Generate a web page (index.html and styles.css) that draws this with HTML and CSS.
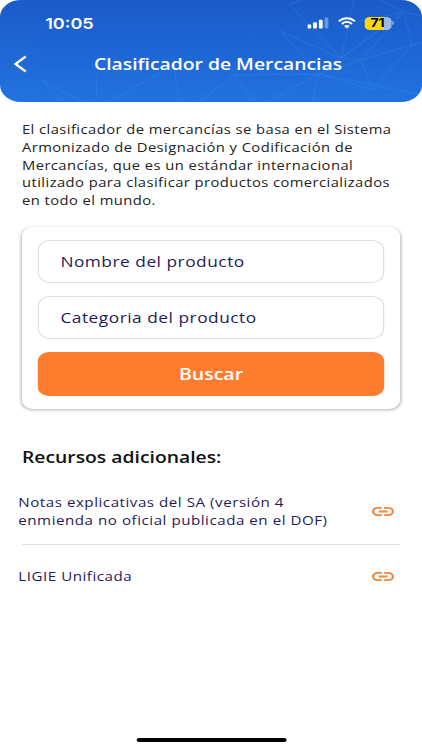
FILE: index.html
```html
<!DOCTYPE html>
<html lang="es">
<head>
  <meta charset="UTF-8" />
  <meta name="viewport" content="width=device-width, initial-scale=1.0" />
  <title>Clasificador de Mercancias</title>
  <link rel="stylesheet" href="styles.css">
</head>
<body>
  <div class="screen">
    <header class="header">
      <svg class="pattern" viewBox="0 0 422 102" preserveAspectRatio="none">
        <path d="M40 79 L84 102 M40 79 L64 101 M97 73 L96 102 M108 102 L160 73 M174 66 L179 102 M199 102 L234 75 L256 102 M234 75 L319 74 L312 102 M319 74 L267 102 M319 74 L422 95 M289 4 L341 58 L280 31 L319 74 L361 60 L412 45 M289 4 L302 0 M341 58 L354 0 M341 58 L404 12 L412 45 L422 42 M361 60 L404 12 L380 0 M361 60 L372 90 L412 45 M341 58 L361 60 M319 74 L372 90 M404 12 L422 16 M404 12 L355 22" />
      </svg>
      <div class="status-bar">
        <span class="clock">10:05</span>
        <svg class="signal" viewBox="0 0 21 12" preserveAspectRatio="none">
          <rect x="0" y="7.5" width="3.8" height="4" rx="1" />
          <rect x="5.7" y="5.3" width="3.8" height="6.2" rx="1" />
          <rect x="11.4" y="2.7" width="3.8" height="8.8" rx="1" />
          <rect x="17" y="0.4" width="3.8" height="11.1" rx="1" opacity=".35" />
        </svg>
        <svg class="wifi" viewBox="0 0 18 12" preserveAspectRatio="none">
          <path d="M1 4.3 C5.5 0.1 12.5 0.1 17 4.3 M3.9 7.1 C6.9 4.4 11.1 4.4 14.1 7.1" />
          <path class="dot" d="M9 11.6 L6.1 9.1 C7.8 7.7 10.2 7.7 11.9 9.1 Z" />
        </svg>
        <div class="battery"><span>71</span></div>
      </div>
      <div class="nav">
        <svg class="back" viewBox="0 0 14 18" preserveAspectRatio="none">
          <path d="M12.3 1.5 L2 9 L12.3 16.5" />
        </svg>
        <h1>Clasificador de Mercancias</h1>
      </div>
    </header>

    <main>
      <p class="intro">El clasificador de mercancías se basa en el Sistema<br>Armonizado de Designación y Codificación de<br>Mercancías, que es un estándar internacional<br>utilizado para clasificar productos comercializados<br>en todo el mundo.</p>

      <form class="card">
        <input type="text" placeholder="Nombre del producto" />
        <input type="text" placeholder="Categoria del producto" />
        <button type="button">Buscar</button>
      </form>

      <h2>Recursos adicionales:</h2>
      <div class="resource">
        <span>Notas explicativas del SA (versión 4<br>enmienda no oficial publicada en el DOF)</span>
        <svg class="link" viewBox="2 7 20 10"><path d="M3.9 12c0-1.71 1.39-3.1 3.1-3.1h4V7H7c-2.76 0-5 2.24-5 5s2.24 5 5 5h4v-1.9H7c-1.71 0-3.1-1.39-3.1-3.1zM8 13h8v-2H8v2zm9-6h-4v1.9h4c1.71 0 3.1 1.39 3.1 3.1s-1.39 3.1-3.1 3.1h-4V17h4c2.76 0 5-2.24 5-5s-2.24-5-5-5z" /></svg>
      </div>
      <div class="resource">
        <span>LIGIE Unificada</span>
        <svg class="link" viewBox="2 7 20 10"><path d="M3.9 12c0-1.71 1.39-3.1 3.1-3.1h4V7H7c-2.76 0-5 2.24-5 5s2.24 5 5 5h4v-1.9H7c-1.71 0-3.1-1.39-3.1-3.1zM8 13h8v-2H8v2zm9-6h-4v1.9h4c1.71 0 3.1 1.39 3.1 3.1s-1.39 3.1-3.1 3.1h-4V17h4c2.76 0 5-2.24 5-5s-2.24-5-5-5z" /></svg>
      </div>
    </main>

    <div class="home-bar"></div>
  </div>
</body>
</html>
```
FILE: styles.css
```css
* {
  box-sizing: border-box;
}
body {
  margin: 0;
  background: #fff;
  font-family: 'Open Sans', 'Noto Sans', sans-serif;
  overflow: hidden;
}
/* 346px wide layout stretched to the full 422px */
.screen {
  display: flex;
  flex-direction: column;
  width: 346px;
  height: 750px;
  transform: scaleX(1.2197);
  transform-origin: 0 0;
}
.header {
  position: relative;
  height: 102px;
  border-radius: 17px;
  background: linear-gradient(to bottom, #1b5bc9, #2273df);
  overflow: hidden;
  color: #fff;
}
.pattern {
  position: absolute;
  top: 0;
  left: 0;
  width: 100%;
  height: 100%;
  fill: none;
  stroke: #3c93ee;
  stroke-width: 1;
  opacity: .28;
}
.status-bar {
  position: relative;
  display: flex;
  align-items: center;
  height: 46px;
  padding: 0 25.5px 0 37px;
}
.clock {
  flex: 1;
  padding-top: 1px;
  font-family: Inter, sans-serif;
  font-size: 14.8px;
  font-weight: 600;
}
.signal {
  width: 17.4px;
  height: 12px;
  margin-right: 7px;
  fill: #fff;
}
.wifi {
  width: 14.8px;
  height: 12px;
  margin-right: 7px;
  fill: none;
  stroke: #fff;
  stroke-width: 2;
}
.wifi .dot {
  fill: #fff;
  stroke: none;
}
.battery {
  position: relative;
  width: 22px;
  height: 13px;
  border-radius: 4px;
  background: linear-gradient(to right, #fdd60b 71%, #9db9e8 71%);
  color: #000;
  font-family: Inter, sans-serif;
  font-size: 11.5px;
  font-weight: 700;
  line-height: 13px;
  text-align: center;
}
.battery::after {
  content: "";
  position: absolute;
  top: 4.5px;
  right: -2px;
  width: 1.2px;
  height: 4px;
  border-radius: 0 2px 2px 0;
  background: #7ea6e4;
}
.nav {
  position: relative;
  display: flex;
  align-items: center;
  height: 35px;
  padding-left: 11px;
}
.back {
  width: 11.5px;
  height: 18px;
  fill: none;
  stroke: #fff;
  stroke-width: 2.2;
}
h1 {
  margin: 0 0 0 54.5px;
  font-size: 15.85px;
  font-weight: 600;
  white-space: nowrap;
}
main {
  flex: 1;
  padding: 19px 18px 0;
}
.intro {
  margin: 0 0 17px;
  color: #222;
  font-size: 12.1px;
  line-height: 17.8px;
  letter-spacing: .36px;
  white-space: nowrap;
}
.card {
  display: flex;
  flex-direction: column;
  gap: 13px;
  height: 182px;
  padding: 13px;
  border-radius: 9px;
  box-shadow: 0 1px 3px rgba(0,0,0,0.3);
}
input {
  height: 43px;
  padding: 0 17.5px;
  border: 1px solid #e0e0e0;
  border-radius: 10px;
  font-family: inherit;
  font-size: 14.2px;
  letter-spacing: .42px;
}
input::placeholder {
  color: #1f1a5a;
}
button {
  height: 44px;
  padding-top: 2px;
  border: none;
  border-radius: 9px;
  background-color: #ff7c2e;
  color: #fff;
  font-family: inherit;
  font-size: 16px;
  font-weight: 600;
}
h2 {
  margin: 36px 0 0;
  color: #111;
  font-size: 15.85px;
  font-weight: 600;
  line-height: 24px;
}
.resource {
  display: flex;
  align-items: center;
  justify-content: space-between;
  height: 63px;
  padding-right: 5px;
  color: #1f1a5a;
  font-size: 12.4px;
  line-height: 18.5px;
  letter-spacing: .44px;
  white-space: nowrap;
}
.resource span {
  margin: 2px 0 0 -3px;
}
h2 + .resource {
  height: 76px;
  padding-top: 10px;
  border-bottom: 1px solid #e0e0e0;
}
.link {
  width: 18px;
  height: 9px;
  fill: #f5853b;
}
.home-bar {
  width: 123px;
  height: 4px;
  margin: 0 auto 8px;
  border-radius: 2px;
  background: #000;
}
```
